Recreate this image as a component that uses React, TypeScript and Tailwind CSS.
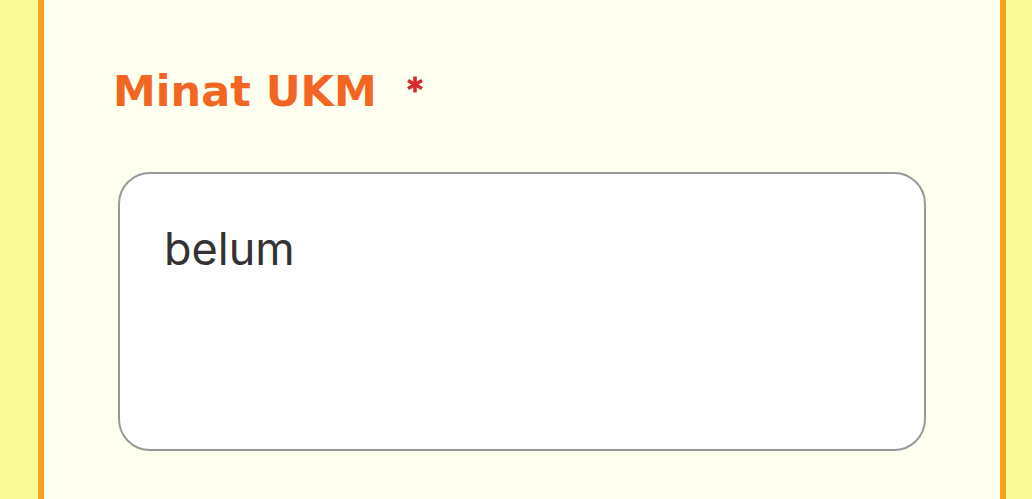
export default function App() {
  return (
    <div className="h-[499px] w-full overflow-hidden bg-[#fafa98] pl-[38px] pr-[26px]">
      <div className="h-full border-x-[6px] border-[#f5a31f] bg-[#fffff0] px-[74px] pt-[65px]">
        <label
          htmlFor="minat-ukm"
          className="-ml-[5px] flex items-center gap-[30px] text-[43px] font-bold leading-[52px] text-[#f26522]"
          style={{ fontFamily: '"DejaVu Sans", sans-serif' }}
        >
          Minat UKM
          {/* required marker */}
          <svg width="16" height="17" viewBox="0 0 16 17" className="-mt-[14px]" aria-hidden="true">
            <g stroke="#d42a2a" strokeWidth="3.6" strokeLinecap="butt">
              <line x1="8" y1="0.5" x2="8" y2="16.5" />
              <line x1="1" y1="4.5" x2="15" y2="12.5" />
              <line x1="1" y1="12.5" x2="15" y2="4.5" />
            </g>
          </svg>
        </label>
        <textarea
          id="minat-ukm"
          readOnly
          defaultValue="belum"
          className="mt-[55px] block h-[279px] w-full resize-none rounded-[32px] border-2 border-[#999999] bg-white px-[44px] pt-[47px] text-[45px] leading-[56px] text-[#333333] outline-none"
          style={{ fontFamily: 'Inter, sans-serif' }}
        />
      </div>
    </div>
  );
}
